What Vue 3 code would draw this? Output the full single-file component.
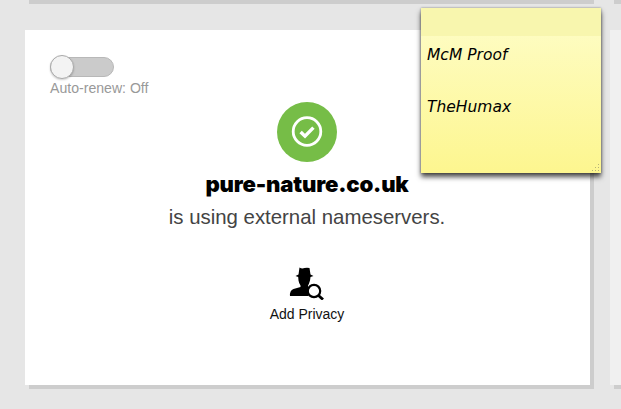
<script setup>
const domain = 'pure-nature.co.uk'
</script>

<template>
  <div class="page">
    <div class="strip-row">
      <div class="strip strip-main"></div>
      <div class="strip strip-next"></div>
    </div>
    <div class="cards">
      <section class="card">
        <div class="renew">
          <div class="toggle"><span class="knob"></span></div>
          <div class="renew-label">Auto-renew: Off</div>
        </div>
        <div class="center">
          <div class="status">
            <svg width="32" height="32" viewBox="0 0 32 32" fill="none">
              <circle cx="16" cy="15.500" r="13.800" stroke="#fff" stroke-width="2.800" />
              <path d="M9.600 16 L14 20.200 L22.400 11.600" stroke="#fff" stroke-width="3.400" />
            </svg>
          </div>
          <h1 class="domain">{{ domain }}</h1>
          <p class="sub">is using external nameservers.</p>
          <div class="privacy">
            <svg width="36" height="33" viewBox="0 0 36 33">
              <path fill="#000" d="M9.500 7.500 L10.500 0.500 Q13 2 15.500 1 Q18 0.500 20.500 1 L21.500 7.500 L24.500 9 L21.500 10 L21 13.500 Q20 17 19 18.500 L19 20.500 L23 22 Q19 25 19.500 29 L1 29 Q0.500 23.500 4.500 22 L11.500 20 L11.500 18.500 Q10 16.500 9.500 13.500 L9.200 10 L6.500 9 Z" />
              <circle cx="25" cy="24" r="6.200" fill="#fff" stroke="#000" stroke-width="2.200" />
              <path d="M29.500 28.500 L34 32.500" stroke="#000" stroke-width="2.800" />
            </svg>
            <span class="privacy-label">Add Privacy</span>
          </div>
        </div>
      </section>
      <section class="card next"></section>
    </div>
    <aside class="note">
      <div class="note-head"></div>
      <div class="note-body">
        <p>McM Proof</p>
        <p>TheHumax</p>
      </div>
      <svg class="grip" width="9" height="9" viewBox="0 0 9 9" fill="#b5b27a">
        <rect x="7" y="1" width="1" height="1" /><rect x="7" y="4" width="1" height="1" /><rect x="7" y="7" width="1" height="1" />
        <rect x="4" y="4" width="1" height="1" /><rect x="4" y="7" width="1" height="1" /><rect x="1" y="7" width="1" height="1" />
      </svg>
    </aside>
  </div>
</template>

<style>
html, body { margin: 0; }
</style>

<style scoped>
.page {
  position: relative;
  width: 621px;
  height: 409px;
  overflow: hidden;
  background: #e6e6e6;
  font-family: "Liberation Sans", Arial, sans-serif;
}
.strip-row { display: flex; height: 4px; padding-left: 29px; gap: 20px; }
.strip { background: #cdcdcd; height: 4px; }
.strip-main { width: 565px; flex: none; }
.strip-next { flex: 1; }
.cards { display: flex; gap: 20px; margin: 26px 0 0 25px; }
.card {
  flex: none;
  box-sizing: border-box;
  width: 565px;
  height: 355px;
  background: #fff;
  box-shadow: 4px 4px 0 #cdcdcd;
  padding: 25px 26px 25px 25px;
}
.card.next { background: #f0f0f0; }
.renew { width: 130px; }
.toggle {
  position: relative;
  width: 64px;
  height: 20px;
  margin-top: 2px;
  box-sizing: border-box;
  border: 1px solid #b8b8b8;
  border-radius: 10px;
  background: #cbcbcb;
}
.knob {
  position: absolute;
  left: -1px;
  top: -3px;
  box-sizing: border-box;
  width: 24px;
  height: 24px;
  border: 1px solid #aaa;
  border-radius: 50%;
  background: #f3f3f3;
  box-shadow: 0 1px 2px rgba(0,0,0,.2);
}
.renew-label { margin-top: 3px; font-size: 14.100px; line-height: 17px; color: #999; white-space: nowrap; }
.center { display: flex; flex-direction: column; align-items: center; margin-top: 5px; }
.status {
  width: 60px;
  height: 60px;
  border-radius: 50%;
  background: #76bd47;
  display: flex;
  align-items: center;
  justify-content: center;
}
.domain {
  margin: 7px 0 0;
  font-family: Inter, sans-serif;
  font-weight: 900;
  font-size: 22.200px;
  line-height: 30px;
  letter-spacing: -0.200px;
  color: #000;
}
.sub { margin: 6px 0 0; font-size: 20.400px; line-height: 24px; color: #444; }
.privacy { display: flex; flex-direction: column; align-items: center; margin-top: 38px; }
.privacy svg { display: block; }
.privacy-label { margin-top: 6px; font-size: 14px; line-height: 17px; color: #111; }
.note {
  position: absolute;
  left: 421px;
  top: 8px;
  width: 180px;
  height: 165px;
  background: linear-gradient(#fefdc9, #fdf68f);
  box-shadow: 0 4px 5px 0 rgba(0,0,0,.7), 0 0 2px rgba(0,0,0,.4);
}
.note-head { height: 28px; background: #f8f6ae; }
.note-body { padding: 9px 6px 0; font-family: "DejaVu Sans", sans-serif; font-style: italic; font-size: 15.500px; color: #000; }
.note-body p { margin: 0 0 32px; line-height: 20px; white-space: nowrap; }
.grip { position: absolute; right: 1px; bottom: 1px; }
</style>
